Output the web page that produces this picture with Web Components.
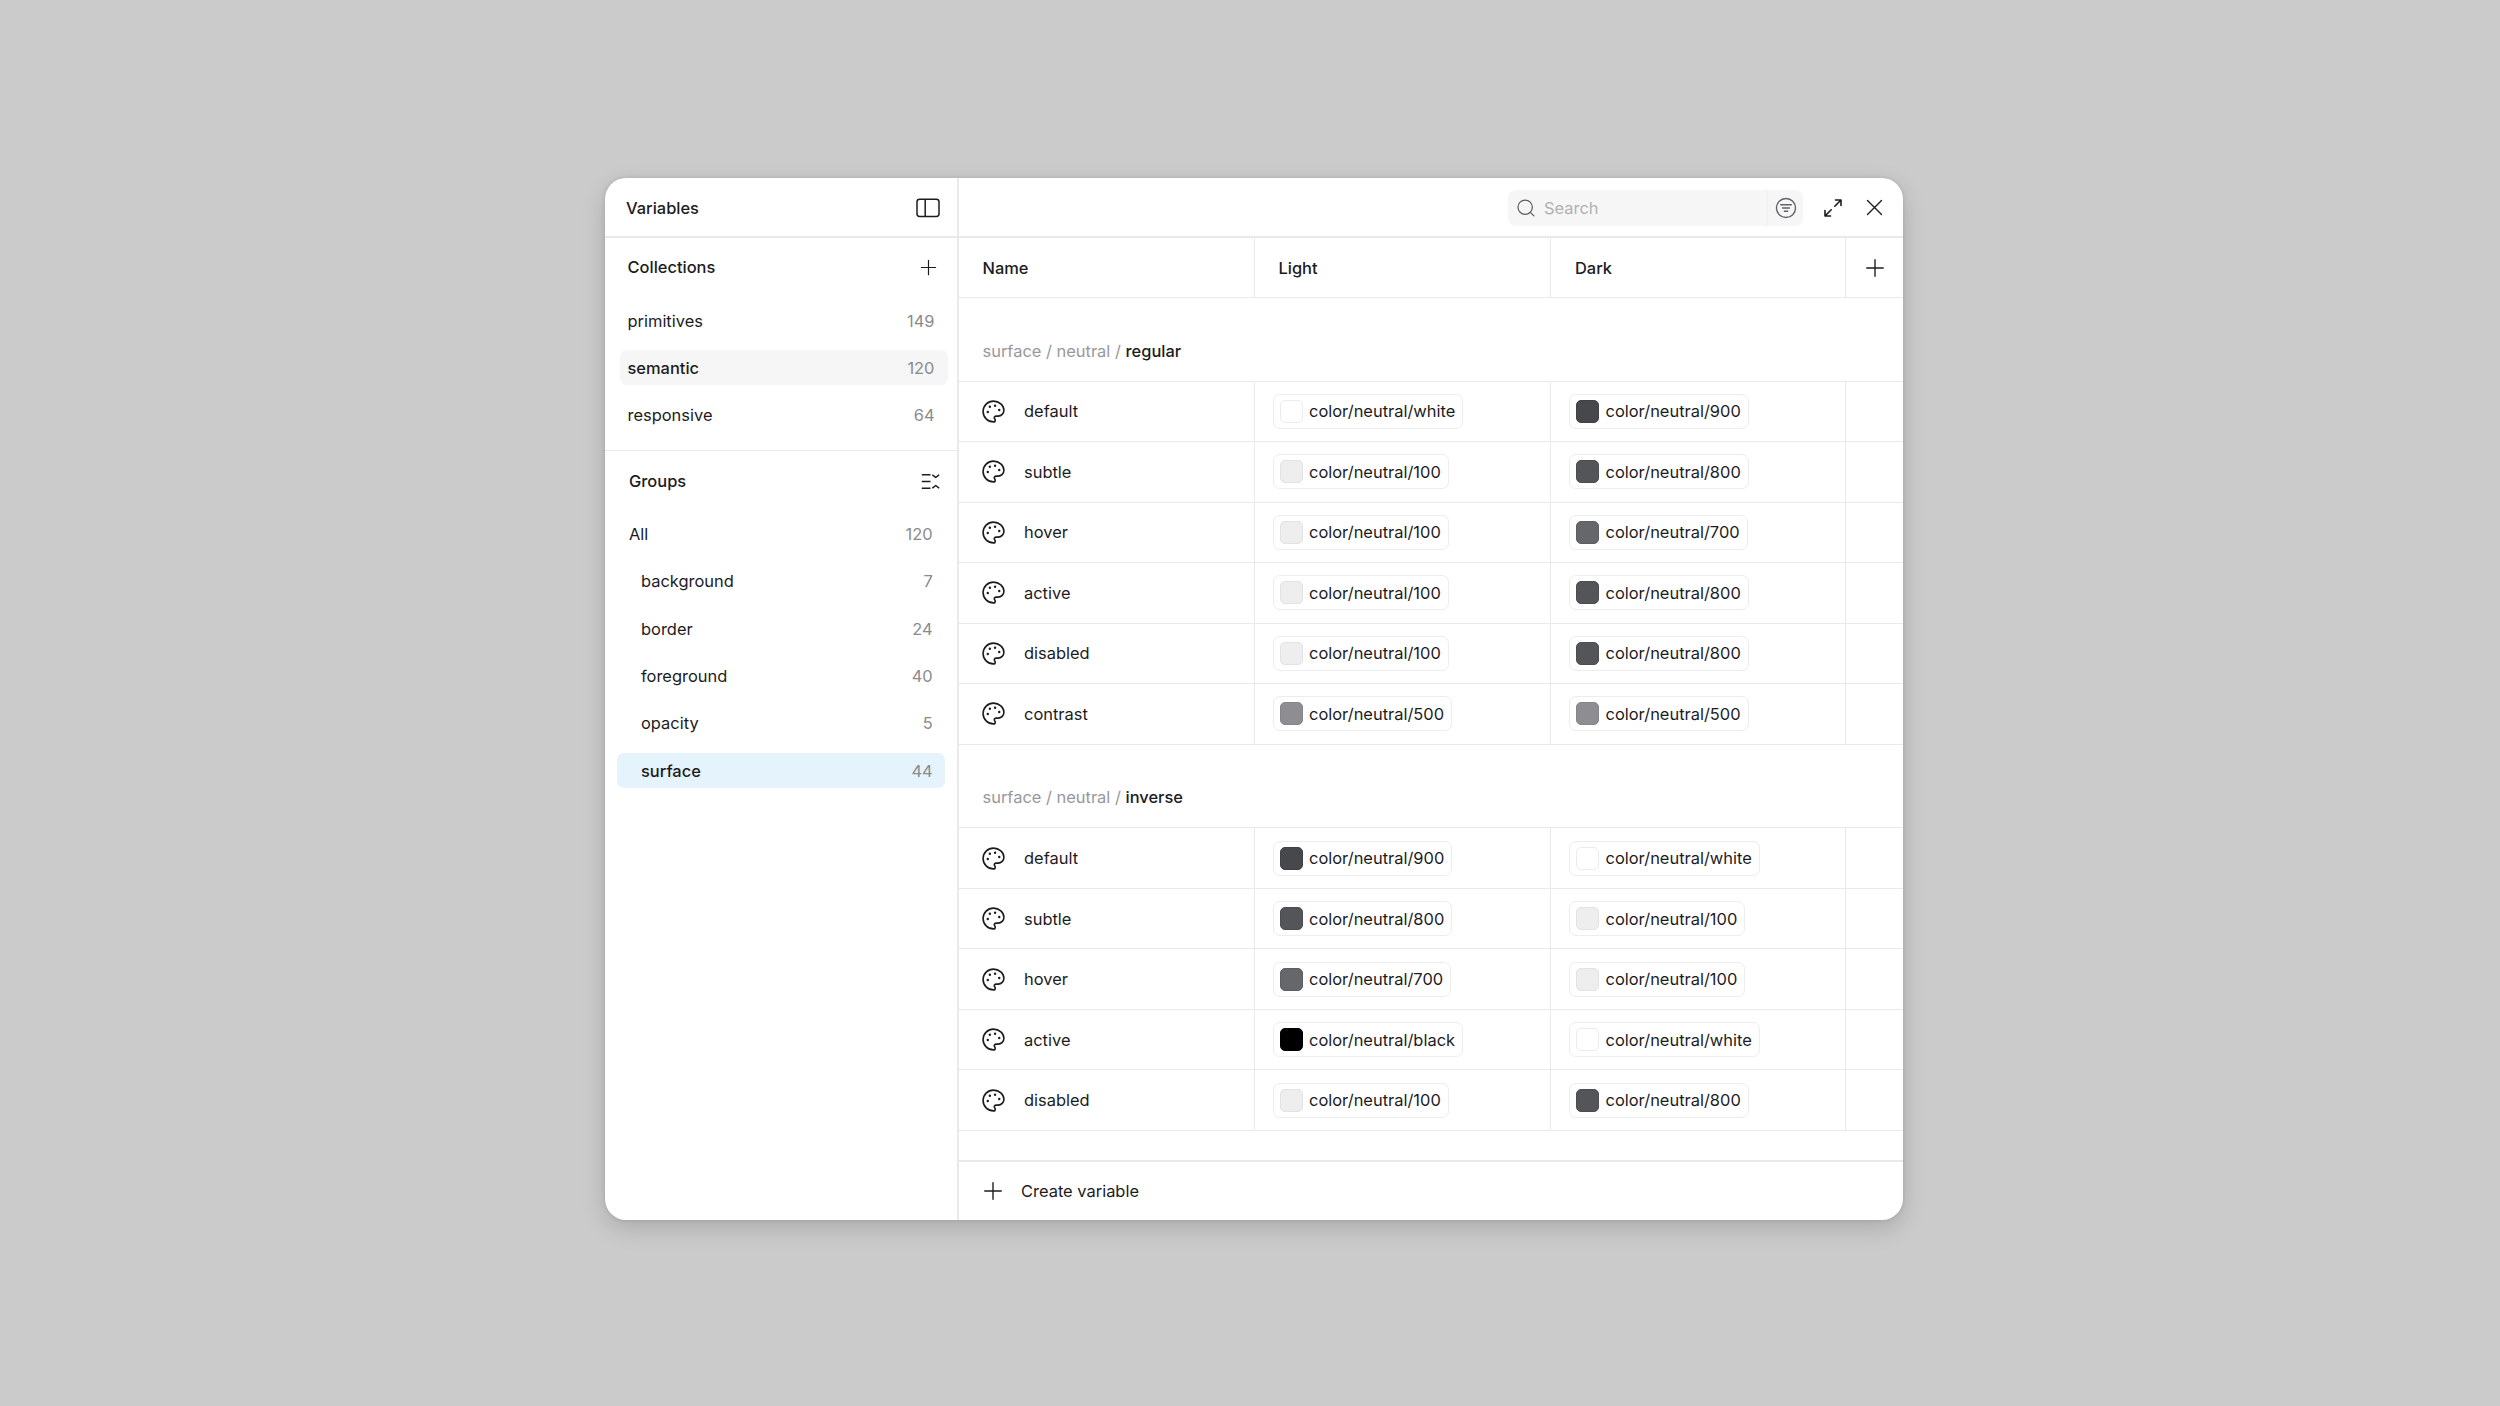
<!DOCTYPE html>
<html>
<head>
<meta charset="utf-8">
<title>Variables</title>
<style>
  html, body { margin: 0; height: 100%; }
  body {
    background: #cbcbcb;
    font-family: Inter, "Liberation Sans", sans-serif;
    color: #1c1c1e;
    overflow: hidden;
  }
  .stage { box-sizing: border-box; height: 1406px; padding: 178px 0 0 605px; display: flex; align-items: flex-start; }
</style>
</head>
<body>
<div class="stage">
  <var-window>
    <var-sidebar slot="side">
      <side-header>Variables
        <var-icon slot="action" name="panel" size="24"></var-icon>
      </side-header>
      <side-section title="Collections" icon="plus" style="--pad-l:22.5px;--title-h:58px;--head-gap:7px;--item-l:22.5px;--item-r:22.5px;--hl-l:15px;--hl-r:9px;--pad-b:17.5px;--icon-off:-3.5px">
        <side-item count="149">primitives</side-item>
        <side-item count="120" active="grey">semantic</side-item>
        <side-item count="64">responsive</side-item>
      </side-section>
      <side-section title="Groups" icon="groups" plain style="--pad-l:24px;--title-h:60px;--head-gap:5.5px;--item-l:24px;--item-r:24.3px;--hl-l:12px;--hl-r:12px;--pad-b:0px;--icon-off:-7.3px">
        <side-item count="120">All</side-item>
        <side-item count="7" indent>background</side-item>
        <side-item count="24" indent>border</side-item>
        <side-item count="40" indent>foreground</side-item>
        <side-item count="5" indent>opacity</side-item>
        <side-item count="44" indent active="blue">surface</side-item>
      </side-section>
    </var-sidebar>
    <var-main slot="main">
      <var-toolbar></var-toolbar>
      <var-table-head></var-table-head>
      <var-group path="surface / neutral / " leaf="regular">
        <var-row name="default"><color-chip slot="light" tone="white">color/neutral/white</color-chip><color-chip slot="dark" tone="900">color/neutral/900</color-chip></var-row>
        <var-row name="subtle"><color-chip slot="light" tone="100">color/neutral/100</color-chip><color-chip slot="dark" tone="800">color/neutral/800</color-chip></var-row>
        <var-row name="hover"><color-chip slot="light" tone="100">color/neutral/100</color-chip><color-chip slot="dark" tone="700">color/neutral/700</color-chip></var-row>
        <var-row name="active"><color-chip slot="light" tone="100">color/neutral/100</color-chip><color-chip slot="dark" tone="800">color/neutral/800</color-chip></var-row>
        <var-row name="disabled"><color-chip slot="light" tone="100">color/neutral/100</color-chip><color-chip slot="dark" tone="800">color/neutral/800</color-chip></var-row>
        <var-row name="contrast"><color-chip slot="light" tone="500">color/neutral/500</color-chip><color-chip slot="dark" tone="500">color/neutral/500</color-chip></var-row>
      </var-group>
      <var-group path="surface / neutral / " leaf="inverse">
        <var-row name="default"><color-chip slot="light" tone="900">color/neutral/900</color-chip><color-chip slot="dark" tone="white">color/neutral/white</color-chip></var-row>
        <var-row name="subtle"><color-chip slot="light" tone="800">color/neutral/800</color-chip><color-chip slot="dark" tone="100">color/neutral/100</color-chip></var-row>
        <var-row name="hover"><color-chip slot="light" tone="700">color/neutral/700</color-chip><color-chip slot="dark" tone="100">color/neutral/100</color-chip></var-row>
        <var-row name="active"><color-chip slot="light" tone="black">color/neutral/black</color-chip><color-chip slot="dark" tone="white">color/neutral/white</color-chip></var-row>
        <var-row name="disabled"><color-chip slot="light" tone="100">color/neutral/100</color-chip><color-chip slot="dark" tone="800">color/neutral/800</color-chip></var-row>
      </var-group>
      <var-footer>Create variable</var-footer>
    </var-main>
  </var-window>
</div>

<script>
{
  const line = '#e9e9ea';
  const textSize = '16.45px';

  const icons = {
    panel: '<rect x="1" y="3.2" width="22" height="17.2" rx="2.6" fill="none" stroke="currentColor" stroke-width="1.5"/><path d="M9.2 3.2v17.2" stroke="currentColor" stroke-width="1.5"/>',
    plus: '<path d="M12 3v18M3 12h18" stroke="currentColor" stroke-width="1.5" stroke-linecap="round"/>',
    groups: '<path d="M1 3.5h11M1 12h11M1 20.5h11" stroke="currentColor" stroke-width="2" fill="none"/><path d="M14.8 4 18.6 7 22.4 4M14.8 20 18.6 17 22.4 20" stroke="currentColor" stroke-width="1.8" fill="none" stroke-linecap="round" stroke-linejoin="round"/>',
    search: '<circle cx="11" cy="11" r="8.6" fill="none" stroke="currentColor" stroke-width="1.5"/><path d="M17.5 17.5 21.5 21.5" stroke="currentColor" stroke-width="1.5" stroke-linecap="round"/>',
    filter: '<circle cx="12" cy="12" r="10.4" fill="none" stroke="currentColor" stroke-width="1.5"/><path d="M6.2 8.4h11.6M8.2 12h7.6M10.2 15.6h3.6" stroke="currentColor" stroke-width="1.5" stroke-linecap="round"/>',
    expand: '<path d="M14.5 4H20v5.5M20 4l-6.2 6.2M9.5 20H4v-5.5M4 20l6.2-6.2" fill="none" stroke="currentColor" stroke-width="1.6" stroke-linecap="round" stroke-linejoin="round"/>',
    close: '<path d="M4 4l16 16M20 4 4 20" stroke="currentColor" stroke-width="1.6" stroke-linecap="round"/>',
    palette: '<path d="M12 2C6.5 2 2 6.5 2 12s4.5 10 10 10c.93 0 1.65-.75 1.65-1.69 0-.44-.18-.83-.44-1.12-.29-.29-.44-.65-.44-1.13a1.64 1.64 0 0 1 1.67-1.67h2c3.05 0 5.55-2.5 5.55-5.55C21.97 6.01 17.46 2 12 2z" fill="none" stroke="currentColor" stroke-width="1.55" stroke-linecap="round" stroke-linejoin="round"/><circle cx="13.5" cy="6.5" r="1.15" fill="currentColor"/><circle cx="17.5" cy="10.5" r="1.15" fill="currentColor"/><circle cx="8.5" cy="7.5" r="1.15" fill="currentColor"/><circle cx="6.5" cy="12.5" r="1.15" fill="currentColor"/>'
  };

  class VarIcon extends HTMLElement {
    connectedCallback() {
      const size = this.getAttribute('size') || '24';
      const name = this.getAttribute('name');
      this.attachShadow({ mode: 'open' }).innerHTML = `
        <style>:host { display: inline-flex; width: ${size}px; height: ${size}px; flex: none; } svg { display: block; width: 100%; height: 100%; }</style>
        <svg viewBox="0 0 24 24" aria-hidden="true">${icons[name] || ''}</svg>`;
    }
  }

  class VarWindow extends HTMLElement {
    constructor() {
      super();
      this.attachShadow({ mode: 'open' }).innerHTML = `
        <style>
          :host {
            display: flex; width: 1298px; height: 1042px; background: #fff;
            border-radius: 21px; overflow: hidden;
            box-shadow: 0 8px 24px rgba(0,0,0,.16), 0 0 4px rgba(0,0,0,.12);
            --cols: 295.5px 296.5px 294.5px 1fr;
            --line: ${line};
          }
        </style>
        <slot name="side"></slot><slot name="main"></slot>`;
    }
  }

  class VarSidebar extends HTMLElement {
    constructor() {
      super();
      this.attachShadow({ mode: 'open' }).innerHTML = `
        <style>:host { display: flex; flex-direction: column; box-sizing: border-box; width: 354px; border-right: 2px solid var(--line); }</style>
        <slot></slot>`;
    }
  }

  class SideHeader extends HTMLElement {
    constructor() {
      super();
      this.attachShadow({ mode: 'open' }).innerHTML = `
        <style>
          :host { display: flex; align-items: center; justify-content: space-between; box-sizing: border-box;
            height: 60px; padding: 1px 17px 0 21px; border-bottom: 2px solid var(--line);
            font-size: ${textSize}; font-weight: 500; }
        </style>
        <slot></slot><slot name="action"></slot>`;
    }
  }

  class SideSection extends HTMLElement {
    connectedCallback() {
      const title = this.getAttribute('title');
      const icon = this.getAttribute('icon');
      const plain = this.hasAttribute('plain');
      this.removeAttribute('title');
      this.attachShadow({ mode: 'open' }).innerHTML = `
        <style>
          :host { display: flex; flex-direction: column; box-sizing: border-box; padding-bottom: var(--pad-b); }
          :host(:not([plain])) { border-bottom: 1.5px solid var(--line); }
          .head { display: flex; align-items: center; justify-content: space-between; height: var(--title-h);
            padding: 0 var(--item-r) 0 var(--pad-l); font-size: ${textSize}; font-weight: ${plain ? 500 : 550}; margin-bottom: var(--head-gap); }
          var-icon { margin-right: var(--icon-off); }
          .list { display: flex; flex-direction: column; gap: 12.3px; padding: 0 var(--hl-r) 0 var(--hl-l); }
        </style>
        <div class="head"><span>${title}</span><var-icon name="${icon}" size="19"></var-icon></div>
        <div class="list"><slot></slot></div>`;
    }
  }

  class SideItem extends HTMLElement {
    connectedCallback() {
      const count = this.getAttribute('count');
      this.attachShadow({ mode: 'open' }).innerHTML = `
        <style>
          :host { display: flex; align-items: center; justify-content: space-between; box-sizing: border-box; height: 35px;
            padding: 0 calc(var(--item-r) - var(--hl-r)) 0 calc(var(--item-l) - var(--hl-l)); border-radius: 7px; font-size: ${textSize}; }
          :host([indent]) { padding-left: 24px; }
          :host([active]) { font-weight: 550; }
          :host([active="grey"]) { background: #f6f6f6; }
          :host([active="blue"]) { background: #e5f3fd; }
          .n { color: #8b8b8d; font-weight: 400; }
        </style>
        <span><slot></slot></span><span class="n">${count}</span>`;
    }
  }

  class VarMain extends HTMLElement {
    constructor() {
      super();
      this.attachShadow({ mode: 'open' }).innerHTML = `
        <style>:host { display: flex; flex-direction: column; flex: 1; min-width: 0; }</style>
        <slot></slot>`;
    }
  }

  class VarToolbar extends HTMLElement {
    constructor() {
      super();
      this.attachShadow({ mode: 'open' }).innerHTML = `
        <style>
          :host { display: flex; align-items: center; justify-content: flex-end; box-sizing: border-box; height: 60px;
            padding: 1px 18px 0 0; gap: 18px; border-bottom: 2px solid var(--line); }
          .search { display: flex; align-items: center; width: 295px; height: 36px; box-sizing: border-box; background: #f6f6f6;
            border-radius: 8px; padding-left: 8px; font-size: ${textSize}; color: #b1b1b3; }
          .search > var-icon { color: #5d5d60; margin-right: 8px; }
          .search span { flex: 1; }
          .filter { display: flex; align-items: center; justify-content: center; box-sizing: border-box; width: 36px; height: 36px; border-left: 1px solid #f0f0f0; color: #626265; }
          .tools { display: flex; align-items: center; gap: 19px; color: #1c1c1e; }
        </style>
        <div class="search">
          <var-icon name="search" size="20"></var-icon><span>Search</span>
          <div class="filter"><var-icon name="filter" size="22"></var-icon></div>
        </div>
        <div class="tools"><var-icon name="expand" size="24"></var-icon><var-icon name="close" size="21"></var-icon></div>`;
    }
  }

  class VarTableHead extends HTMLElement {
    constructor() {
      super();
      this.attachShadow({ mode: 'open' }).innerHTML = `
        <style>
          :host { display: grid; grid-template-columns: var(--cols); box-sizing: border-box; height: 60px;
            border-bottom: 1.5px solid var(--line); font-size: ${textSize}; font-weight: 550; }
          div { display: flex; align-items: center; padding-left: 24px; border-right: 1.5px solid var(--line); }
          .first { padding-left: 23.5px; }
          div:last-child { border-right: 0; padding: 0 0 0 2px; justify-content: center; }
        </style>
        <div class="first">Name</div><div>Light</div><div>Dark</div>
        <div><var-icon name="plus" size="22"></var-icon></div>`;
    }
  }

  class VarGroup extends HTMLElement {
    connectedCallback() {
      const path = this.getAttribute('path');
      const leaf = this.getAttribute('leaf');
      this.attachShadow({ mode: 'open' }).innerHTML = `
        <style>
          :host { display: block; }
          .title { display: flex; align-items: flex-end; box-sizing: border-box; height: 83.7px; padding: 0 0 20px 23.5px;
            border-bottom: 1.5px solid var(--line); font-size: ${textSize}; color: #98989a; white-space: pre; }
          b { font-weight: 550; color: #1c1c1e; }
        </style>
        <div class="title"><span>${path}<b>${leaf}</b></span></div>
        <slot></slot>`;
    }
  }

  class VarRow extends HTMLElement {
    connectedCallback() {
      const name = this.getAttribute('name');
      this.attachShadow({ mode: 'open' }).innerHTML = `
        <style>
          :host { display: grid; grid-template-columns: var(--cols); box-sizing: border-box; height: 60.5px;
            border-bottom: 1.5px solid var(--line); font-size: ${textSize}; }
          .c { display: flex; align-items: center; border-right: 1.5px solid var(--line); padding-left: 18px; }
          .c.name { padding-left: 22px; gap: 18px; }
          .c:last-child { border-right: 0; }
        </style>
        <div class="c name"><var-icon name="palette" size="25"></var-icon><span>${name}</span></div>
        <div class="c"><slot name="light"></slot></div>
        <div class="c"><slot name="dark"></slot></div>
        <div class="c"></div>`;
    }
  }

  const tones = {
    white: ['#ffffff', '#ececed'],
    black: ['#000000', '#000000'],
    100: ['#eeeeef', '#e2e2e4'],
    500: ['#8e8e92', '#85858a'],
    700: ['#66676a', '#5e5f62'],
    800: ['#545558', '#4c4d50'],
    900: ['#47484b', '#404144']
  };

  class ColorChip extends HTMLElement {
    connectedCallback() {
      const [fill, edge] = tones[this.getAttribute('tone')];
      this.attachShadow({ mode: 'open' }).innerHTML = `
        <style>
          :host { display: inline-flex; align-items: center; gap: 6.5px; box-sizing: border-box; height: 35px;
            padding: 0 7px 0 6px; border: 1.5px solid #ededee; border-radius: 7px; font-size: ${textSize}; white-space: nowrap; }
          i { display: block; width: 23px; height: 23px; box-sizing: border-box; border-radius: 5px; background: ${fill}; border: 1.5px solid ${edge}; }
        </style>
        <i></i><slot></slot>`;
    }
  }

  class VarFooter extends HTMLElement {
    constructor() {
      super();
      this.attachShadow({ mode: 'open' }).innerHTML = `
        <style>
          :host { display: flex; align-items: center; gap: 17px; box-sizing: border-box; height: 60px; margin-top: auto;
            padding-left: 23px; border-top: 2px solid var(--line); font-size: ${textSize}; }
        </style>
        <var-icon name="plus" size="22"></var-icon><span><slot></slot></span>`;
    }
  }

  const defs = {
    'var-icon': VarIcon, 'var-window': VarWindow, 'var-sidebar': VarSidebar, 'side-header': SideHeader,
    'side-section': SideSection, 'side-item': SideItem, 'var-main': VarMain, 'var-toolbar': VarToolbar,
    'var-table-head': VarTableHead, 'var-group': VarGroup, 'var-row': VarRow, 'color-chip': ColorChip, 'var-footer': VarFooter
  };
  Object.keys(defs).forEach((tag) => customElements.define(tag, defs[tag]));
}
</script>
</body>
</html>
